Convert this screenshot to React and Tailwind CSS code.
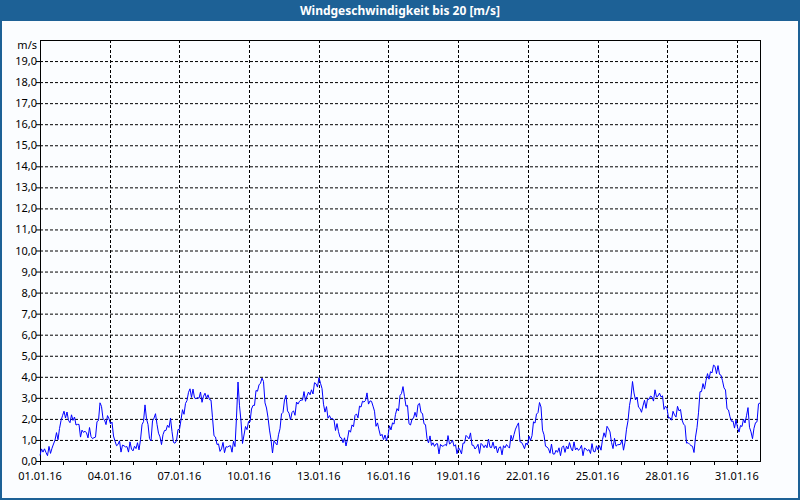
import React from 'react';

// key points of the wind curve: [x pixel, m/s]
const keys = [
  [40, 0.5], [50, 0.4], [55, 1.0], [60, 1.5], [63, 2.4], [68, 2.0], [75, 2.0], [80, 1.4], [90, 1.3], [95, 1.0],
  [100, 2.7], [105, 1.8], [110, 2.1], [115, 0.9], [120, 0.7], [135, 0.6], [140, 0.8], [145, 2.6], [150, 0.9],
  [155, 2.4], [160, 0.9], [170, 1.9], [175, 0.7], [180, 1.8], [190, 3.4], [195, 3.0], [210, 3.1], [215, 1.0],
  [220, 0.6], [235, 0.7], [238, 3.7], [242, 1.0], [250, 2.0], [255, 3.0], [262, 4.0], [268, 2.0], [272, 0.6],
  [278, 1.0], [285, 3.1], [290, 2.0], [300, 2.9], [310, 3.2], [320, 3.9], [325, 2.4], [335, 1.8], [340, 1.2],
  [345, 0.8], [355, 2.0], [365, 3.0], [372, 2.8], [378, 1.5], [385, 1.0], [395, 2.0], [403, 3.5], [410, 1.7],
  [420, 2.7], [428, 1.0], [440, 0.6], [450, 1.0], [460, 0.4], [468, 1.3], [475, 0.6], [490, 0.8], [500, 0.5],
  [510, 0.8], [518, 1.8], [522, 0.6], [530, 1.0], [540, 2.8], [545, 0.7], [555, 0.4], [570, 0.7], [585, 0.5],
  [600, 0.6], [608, 1.7], [612, 0.8], [625, 0.8], [632, 3.6], [640, 2.4], [650, 3.0], [660, 3.2], [670, 2.0],
  [680, 2.5], [688, 0.8], [695, 0.6], [700, 3.2], [708, 4.0], [715, 4.5], [722, 4.0], [730, 2.0], [740, 1.5],
  [748, 2.3], [752, 1.0], [760, 2.8],
];

const X0 = 40, X1 = 760, Y0 = 461, PX = 21.05, DAY = 23.23;
const yOf = (v) => Y0 - v * PX;

function buildPath() {
  const pts = [];
  let k = 0;
  for (let x = X0; x <= X1; x += 1.5) {
    while (k < keys.length - 2 && keys[k + 1][0] < x) k++;
    const [xa, va] = keys[k], [xb, vb] = keys[k + 1];
    const t = Math.min(1, Math.max(0, (x - xa) / (xb - xa)));
    let v = va + (vb - va) * t;
    v += 0.18 * Math.sin(x * 1.7) + 0.12 * Math.sin(x * 3.1 + 1);
    v = Math.max(0.25, v);
    pts.push(`${x.toFixed(1)},${yOf(v).toFixed(1)}`);
  }
  return 'M' + pts.join(' L');
}

const days = Array.from({ length: 31 }, (_, i) => i);
const labels = [1, 4, 7, 10, 13, 16, 19, 22, 25, 28, 31];

export default function App() {
  const path = buildPath();
  return (
    <div className="w-[800px] h-[500px] flex flex-col bg-[#1d6196] font-['DejaVu_Sans',sans-serif]">
      <div className="h-[21px] flex items-center justify-center text-white text-[12px] font-bold">
        Windgeschwindigkeit bis 20 [m/s]
      </div>
      <div className="flex-1 mx-[2px] mb-[2px] bg-[#fbfdff]">
        <svg width="796" height="477" viewBox="2 21 796 477" className="block">
          {Array.from({ length: 19 }, (_, i) => i + 1).map((v) => (
            <line key={v} x1={X0} x2={X1} y1={yOf(v) + 0.5} y2={yOf(v) + 0.5} stroke="#000" strokeDasharray="3 2" />
          ))}
          {labels.slice(1).map((d) => {
            const x = Math.round(X0 + (d - 1) * DAY) + 0.5;
            return <line key={d} x1={x} x2={x} y1={40} y2={Y0} stroke="#000" strokeDasharray="3 2" />;
          })}
          <rect x={X0 + 0.5} y={40.5} width={X1 - X0} height={Y0 - 40} fill="none" stroke="#000" />
          {days.map((d) => {
            const x = Math.round(X0 + d * DAY) + 0.5;
            return <line key={d} x1={x} x2={x} y1={Y0} y2={Y0 + 4} stroke="#000" />;
          })}
          {Array.from({ length: 20 }, (_, i) => i).map((v) => (
            <g key={v}>
              <line x1={X0 - 4} x2={X0} y1={yOf(v) + 0.5} y2={yOf(v) + 0.5} stroke="#000" />
              <text x={X0 - 3} y={yOf(v) + 4} textAnchor="end" fontSize="11" fill="#000">{v.toFixed(1).replace('.', ',')}</text>
            </g>
          ))}
          <text x={X0 - 3} y={49} textAnchor="end" fontSize="11" fill="#000">m/s</text>
          {labels.map((d) => (
            <text key={d} x={X0 + (d - 1) * DAY} y={480} textAnchor="middle" fontSize="11" fill="#000">
              {String(d).padStart(2, '0')}.01.16
            </text>
          ))}
          <path d={path} fill="none" stroke="#0000ff" strokeWidth="1" />
        </svg>
      </div>
    </div>
  );
}
